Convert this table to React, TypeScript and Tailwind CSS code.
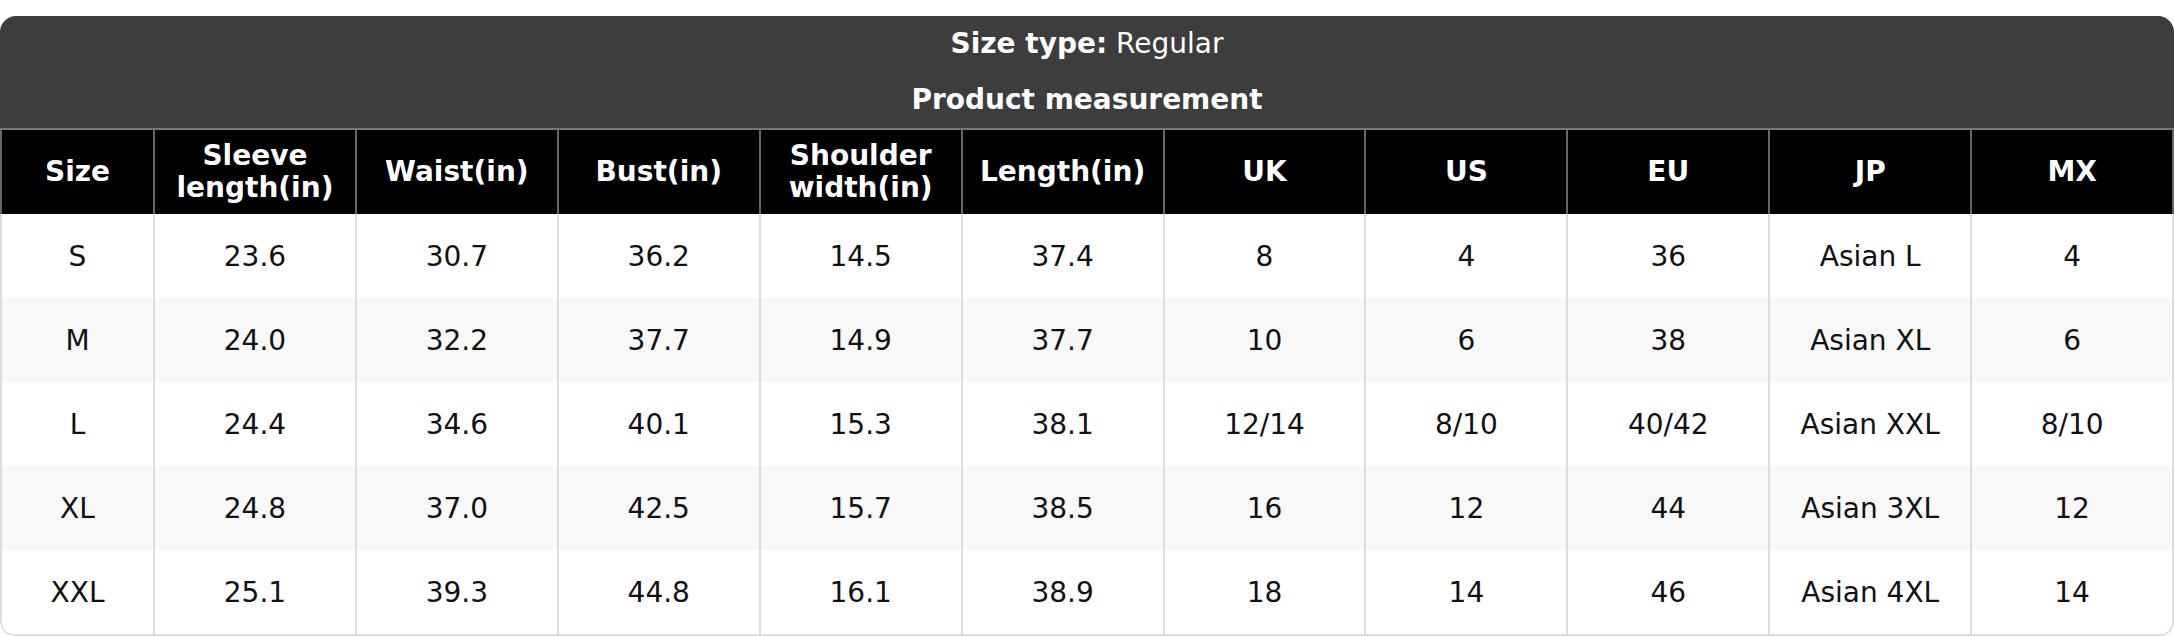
import React from "react";

const headers: string[][] = [
  ["Size"],
  ["Sleeve", "length(in)"],
  ["Waist(in)"],
  ["Bust(in)"],
  ["Shoulder", "width(in)"],
  ["Length(in)"],
  ["UK"],
  ["US"],
  ["EU"],
  ["JP"],
  ["MX"],
];

const rows: string[][] = [
  ["S", "23.6", "30.7", "36.2", "14.5", "37.4", "8", "4", "36", "Asian L", "4"],
  ["M", "24.0", "32.2", "37.7", "14.9", "37.7", "10", "6", "38", "Asian XL", "6"],
  ["L", "24.4", "34.6", "40.1", "15.3", "38.1", "12/14", "8/10", "40/42", "Asian XXL", "8/10"],
  ["XL", "24.8", "37.0", "42.5", "15.7", "38.5", "16", "12", "44", "Asian 3XL", "12"],
  ["XXL", "25.1", "39.3", "44.8", "16.1", "38.9", "18", "14", "46", "Asian 4XL", "14"],
];

export default function App() {
  return (
    <div
      className="w-[2174px] h-[636px] bg-white pt-[16px]"
      style={{ fontFamily: "'DejaVu Sans', 'Liberation Sans', sans-serif" }}
    >
      <div className="rounded-t-[16px] rounded-b-[14px] overflow-hidden bg-white">
        <div className="bg-[#3d3d3d] text-white text-center text-[28px] leading-[33px] pt-[11px] pb-[12px]">
          <div>
            <span className="font-bold">Size type:</span> Regular
          </div>
          <div className="font-bold mt-[23px]">Product measurement</div>
        </div>
        <div className="flex border-t-2 border-[#777] bg-black text-white font-bold text-[28px] leading-[32px]">
          {headers.map((h, i) => (
            <div
              key={i}
              className={
                i === 0
                  ? "w-[153px] shrink-0 h-[84px] flex flex-col items-center justify-center border-l-2 border-[#666]"
                  : i === headers.length - 1
                  ? "flex-1 h-[84px] flex flex-col items-center justify-center border-l-2 border-r-2 border-[#666]"
                  : "flex-1 h-[84px] flex flex-col items-center justify-center border-l-2 border-[#666]"
              }
            >
              {h.map((line, j) => (
                <div key={j}>{line}</div>
              ))}
            </div>
          ))}
        </div>
        <div className="border-x-2 border-b-2 border-[#dddddd] rounded-b-[14px] overflow-hidden text-[#111] text-[28px] leading-[33px]">
          {rows.map((r, ri) => (
            <div key={ri} className={ri % 2 === 1 ? "flex bg-[#f8f8f8]" : "flex bg-white"}>
              {r.map((c, ci) => (
                <div
                  key={ci}
                  className={
                    ci === 0
                      ? "w-[151px] shrink-0 h-[84px] flex items-center justify-center"
                      : "flex-1 h-[84px] flex items-center justify-center border-l-2 border-[#dddddd]"
                  }
                >
                  {c}
                </div>
              ))}
            </div>
          ))}
        </div>
      </div>
    </div>
  );
}
